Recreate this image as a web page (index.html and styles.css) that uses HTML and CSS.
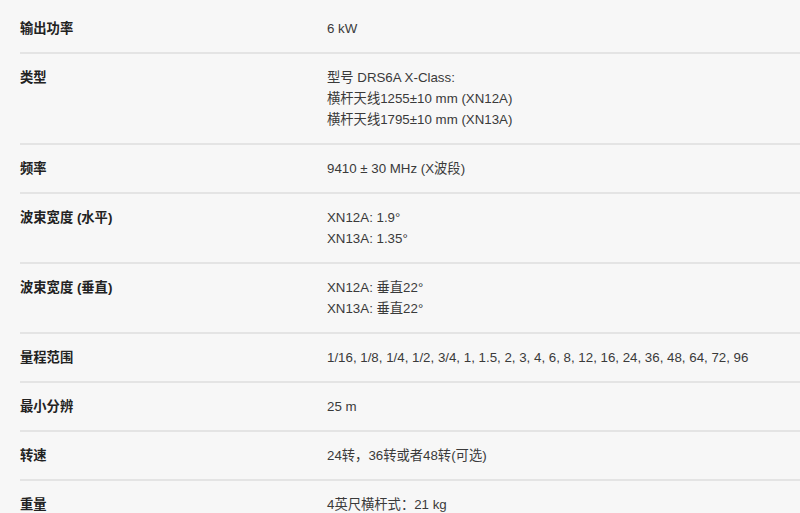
FILE: index.html
```html
<!DOCTYPE html>
<html lang="zh-CN">
<head>
<meta charset="UTF-8">
<meta name="viewport" content="width=device-width, initial-scale=1.0">
<title>规格</title>
<link rel="stylesheet" href="styles.css">
</head>
<body>
<div class="specs">
  <div class="spec-row">
    <div class="spec-name">输出功率</div>
    <div class="spec-value">6 kW</div>
  </div>
  <div class="spec-row">
    <div class="spec-name">类型</div>
    <div class="spec-value">型号 DRS6A X-Class:<br>横杆天线1255±10 mm (XN12A)<br>横杆天线1795±10 mm (XN13A)</div>
  </div>
  <div class="spec-row">
    <div class="spec-name">频率</div>
    <div class="spec-value">9410 ± 30 MHz (X波段)</div>
  </div>
  <div class="spec-row">
    <div class="spec-name">波束宽度 (水平)</div>
    <div class="spec-value">XN12A: 1.9°<br>XN13A: 1.35°</div>
  </div>
  <div class="spec-row">
    <div class="spec-name">波束宽度 (垂直)</div>
    <div class="spec-value">XN12A: 垂直22°<br>XN13A: 垂直22°</div>
  </div>
  <div class="spec-row">
    <div class="spec-name">量程范围</div>
    <div class="spec-value">1/16, 1/8, 1/4, 1/2, 3/4, 1, 1.5, 2, 3, 4, 6, 8, 12, 16, 24, 36, 48, 64, 72, 96</div>
  </div>
  <div class="spec-row">
    <div class="spec-name">最小分辨</div>
    <div class="spec-value">25 m</div>
  </div>
  <div class="spec-row">
    <div class="spec-name">转速</div>
    <div class="spec-value">24转，36转或者48转(可选)</div>
  </div>
  <div class="spec-row">
    <div class="spec-name">重量</div>
    <div class="spec-value">4英尺横杆式：21 kg</div>
  </div>
</div>
</body>
</html>
```

FILE: styles.css
```css
body {
  margin: 0;
  background-color: #f7f7f7;
  font-family: "Liberation Sans", Arial, "Noto Sans CJK SC", sans-serif;
  font-size: 13.3px;
  color: #333;
}

.specs {
  margin-left: 20px;
  padding-top: 5px;
}

.spec-row {
  display: grid;
  grid-template-columns: 307px 1fr;
  padding: 13px 0 13px;
  line-height: 21px;
  border-bottom: 2px solid #e4e4e4;
}

.spec-name {
  font-weight: bold;
  color: #222;
}

.spec-value {
  color: #3a3a3a;
}
```
